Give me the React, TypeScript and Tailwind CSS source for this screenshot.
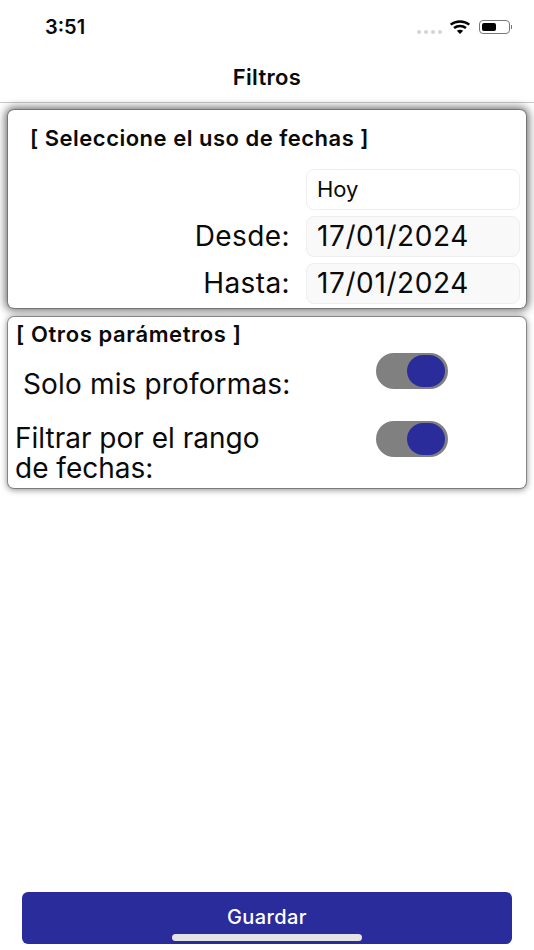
const font = "font-['Inter','Liberation_Sans',sans-serif]";

function Toggle() {
  return (
    <div className="flex h-9 w-[72px] items-center justify-end rounded-full bg-[#808080] pr-[3px]">
      <div className="h-8 w-[38px] rounded-full bg-[#2a2c9b]" />
    </div>
  );
}

function DateRow({ label, value }: { label: string; value: string }) {
  return (
    <div className="flex items-center">
      <div className="w-[292px] pr-[16px] text-right text-[28px] leading-[39px] tracking-[0.4px] text-[#0a0a0a]">
        {label}
      </div>
      <div className="flex h-[41px] w-[214px] items-center rounded-lg border border-[#eeeeee] bg-[#f9f9f9] pb-px pl-[10px] text-[28px] tracking-[0.6px] text-[#0a0a0a]">
        {value}
      </div>
    </div>
  );
}

export default function App() {
  return (
    <div className={`relative flex h-[950px] w-[534px] flex-col overflow-hidden bg-white ${font}`}>
      {/* status bar */}
      <div className="flex h-[54px] shrink-0 items-start justify-between pl-[45px] pr-[22px] pt-[15px]">
        <span className="text-[20px] font-semibold leading-6 text-[#0a0a0a]">3:51</span>
        <div className="flex items-center pt-[5px]">
          <div className="mr-[7px] mt-[9px] flex gap-[3px]">
            <div className="h-1 w-1 rounded-full bg-[#d4d4d4]" />
            <div className="h-1 w-1 rounded-full bg-[#d4d4d4]" />
            <div className="h-1 w-1 rounded-full bg-[#d4d4d4]" />
            <div className="h-1 w-1 rounded-full bg-[#d4d4d4]" />
          </div>
          <svg width="22" height="14" viewBox="0 0 22 15" fill="none" stroke="#000" strokeWidth="2.6">
            <path d="M1 5C6.5 .4 15.5 .4 21 5" />
            <path d="M4.6 8.6C8.2 5.6 13.8 5.6 17.4 8.6" />
            <path d="M11 15 7.6 11.6C9.6 10.2 12.4 10.2 14.4 11.6Z" fill="#000" stroke="none" />
          </svg>
          <div className="ml-[8px] flex items-center">
            <div className="h-[14px] w-[31px] rounded-[4px] border border-[#777] p-[2px]">
              <div className="h-full w-[14px] rounded-[2px] bg-black" />
            </div>
            <div className="ml-[1px] h-1 w-[1px] bg-[#777]" />
          </div>
        </div>
      </div>

      {/* header */}
      <div className="flex h-[49px] shrink-0 items-center justify-center border-b border-[#c9c9c9] pb-[2px] text-[22px] font-semibold tracking-[0.3px] text-[#0a0a0a]">
        Filtros
      </div>

      {/* fechas */}
      <div className="mx-2 mt-[7px] h-[198px] shrink-0 rounded-md bg-white px-[6px] shadow-[0_0_0_1px_rgba(0,0,0,0.25),0_0_8px_3px_rgba(0,0,0,0.55)]">
        <div className="pl-4 pt-[14px] text-[22px] font-semibold leading-7 tracking-[0.5px] text-[#0a0a0a]">
          [ Seleccione el uso de fechas ]
        </div>
        <div className="mt-[17px] flex flex-col gap-[6px]">
          <div className="flex justify-end">
            <div className="flex h-[41px] w-[214px] items-center rounded-lg border border-[#eeeeee] bg-white pl-[10px] text-[22px] text-[#0a0a0a]">
              Hoy
            </div>
          </div>
          <DateRow label="Desde:" value="17/01/2024" />
          <DateRow label="Hasta:" value="17/01/2024" />
        </div>
      </div>

      {/* otros */}
      <div className="mx-2 mt-[9px] h-[171px] shrink-0 rounded-md bg-white pl-[7px] shadow-[0_0_0_1px_rgba(0,0,0,0.3),0_1px_6px_1px_rgba(0,0,0,0.45)]">
        <div className="pl-px pt-[3px] text-[22px] font-semibold leading-7 tracking-[0.6px] text-[#0a0a0a]">
          [ Otros parámetros ]
        </div>
        <div className="flex h-[68px] items-start justify-between pr-[78px]">
          <div className="pl-2 pt-[17px] text-[28px] leading-[38px] tracking-[0.15px] text-[#0a0a0a]">
            Solo mis proformas:
          </div>
          <div className="pt-[5px]">
            <Toggle />
          </div>
        </div>
        <div className="flex items-start justify-between pr-[78px]">
          <div className="w-[270px] pt-[7px] text-[28px] leading-[30px] text-[#0a0a0a]">
            Filtrar por el rango de fechas:
          </div>
          <div className="pt-[5px]">
            <Toggle />
          </div>
        </div>
      </div>

      {/* guardar */}
      <div className="mt-auto px-[22px] pb-[6px]">
        <button className="flex h-[52px] w-full items-center justify-center rounded-md bg-[#2a2c9b] pb-[3px] text-[20px] font-medium tracking-[0.4px] text-white">
          Guardar
        </button>
      </div>
      <div className="absolute bottom-[9px] left-[172px] h-[7px] w-[190px] rounded-full bg-[#e4e4e4]" />
    </div>
  );
}
